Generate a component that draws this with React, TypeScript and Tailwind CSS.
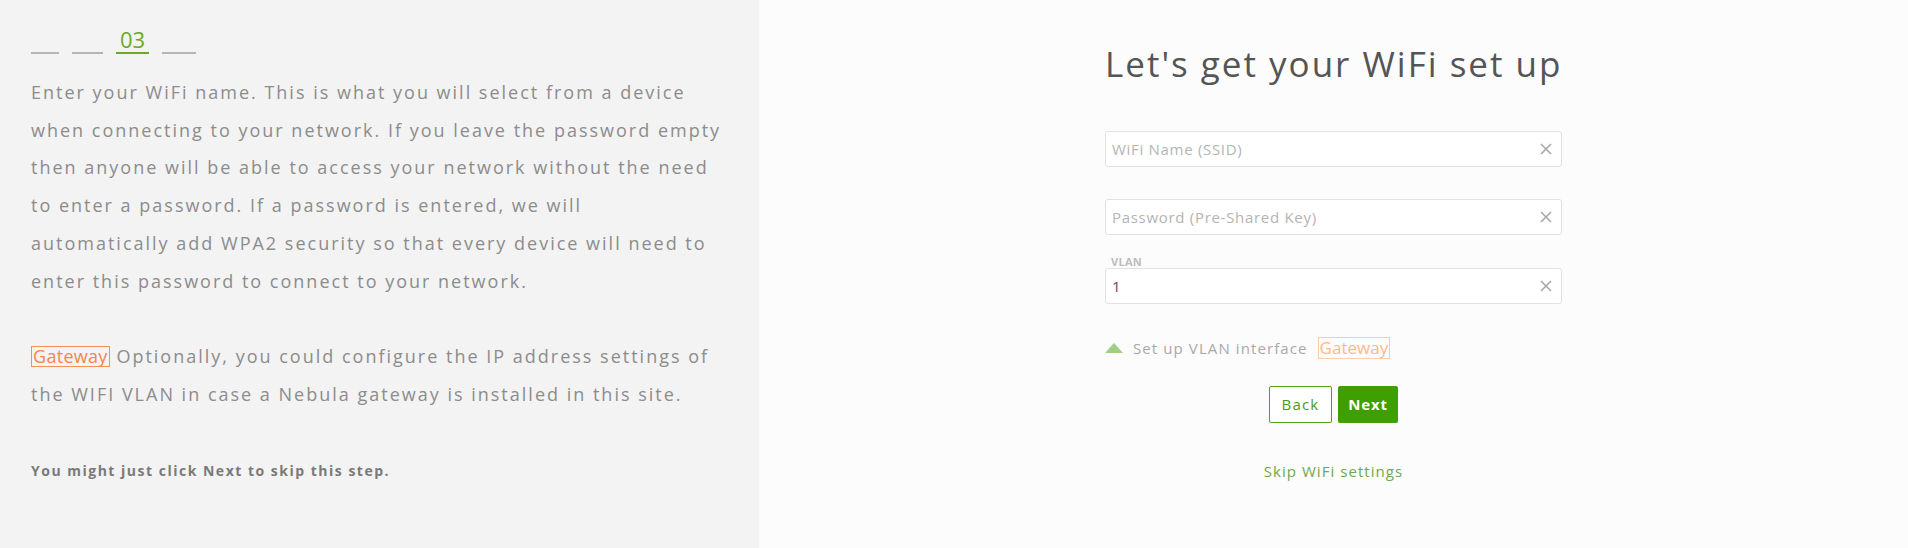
import React from "react";

function XIcon() {
  return (
    <svg width="12" height="12" viewBox="0 0 12 12" className="shrink-0">
      <path d="M1 1 L11 11 M11 1 L1 11" stroke="#a8a8a8" strokeWidth="1.6" fill="none" />
    </svg>
  );
}

function Field({ placeholder, value }: { placeholder?: string; value?: string }) {
  return (
    <div className="flex h-[36px] items-center justify-between rounded-[3px] border border-[#e1e1e1] bg-white pl-[6px] pr-[9px]">
      {value ? (
        <span className="text-[15px] text-[#555555]">{value}</span>
      ) : (
        <span className="text-[15px] tracking-[0.7px] text-[#b4b4b4]">{placeholder}</span>
      )}
      <XIcon />
    </div>
  );
}

const lines = [
  "Enter your WiFi name. This is what you will select from a device",
  "when connecting to your network. If you leave the password empty",
  "then anyone will be able to access your network without the need",
  "to enter a password. If a password is entered, we will",
  "automatically add WPA2 security so that every device will need to",
  "enter this password to connect to your network.",
];

export default function App() {
  return (
    <div
      className="flex h-[548px] w-full"
      style={{ fontFamily: '"Open Sans", "Liberation Sans", sans-serif' }}
    >
      <div className="w-[759px] shrink-0 bg-[#f3f3f3] pl-[31px] pt-[26px]">
        <div className="flex gap-[13px] text-[22px] leading-[26px]">
          <span className="w-[28px] border-b-2 border-[#b5b5b5] text-transparent">01</span>
          <span className="w-[31px] border-b-2 border-[#b5b5b5] text-transparent">02</span>
          <span className="w-[33px] border-b-2 border-[#6aaa1e] text-center text-[#6aaa1e]">03</span>
          <span className="w-[34px] border-b-2 border-[#b5b5b5] text-transparent">04</span>
        </div>
        <div className="mt-[20px] text-[18px] leading-[37.7px] tracking-[2px] text-[#8c8c8c]">
          {lines.map((l) => (
            <div key={l} className="whitespace-nowrap">
              {l}
            </div>
          ))}
          <div className="h-[37.7px]" />
          <div className="whitespace-nowrap">
            <span className="inline-block border border-[#f5924f] px-[1px] leading-[19px] tracking-[0.3px] text-[#f8864a]">
              Gateway
            </span>{" "}
            Optionally, you could configure the IP address settings of
          </div>
          <div className="whitespace-nowrap">
            the WIFI VLAN in case a Nebula gateway is installed in this site.
          </div>
        </div>
        <div className="mt-[48px] text-[14px] font-bold leading-[20px] tracking-[1.5px] text-[#7a7a7a]">
          You might just click Next to skip this step.
        </div>
      </div>
      <div className="flex flex-1 justify-center bg-[#fcfcfc] pt-[40px]">
        <div className="w-[457px]">
          <h1 className="whitespace-nowrap text-[35px] font-normal leading-[48px] tracking-[2px] text-[#555555]">
            Let's get your WiFi set up
          </h1>
          <div className="mt-[43px]">
            <Field placeholder="WiFi Name (SSID)" />
          </div>
          <div className="mt-[32px]">
            <Field placeholder="Password (Pre-Shared Key)" />
          </div>
          <div className="mt-[21px] pl-[6px] text-[11px] font-bold leading-[12px] tracking-[0.3px] text-[#bdbdbd]">
            VLAN
          </div>
          <Field value="1" />
          <div className="mt-[33px] flex h-[22px] items-center">
            <svg width="18" height="10" viewBox="0 0 18 10" className="shrink-0">
              <polygon points="9,0 18,10 0,10" fill="#9ecf84" />
            </svg>
            <span className="ml-[10px] text-[15px] tracking-[1.1px] text-[#a9a9a9]">
              Set up VLAN interface
            </span>
            <span className="ml-[10px] inline-block border border-[#ffcaa8] px-[1px] text-[17px] leading-[20px] text-[#ffb98c]">
              Gateway
            </span>
          </div>
          <div className="mt-[27px] flex justify-center gap-[6px]">
            <button className="h-[37px] w-[63px] rounded-[2px] border border-[#4ea11c] bg-white text-[15px] tracking-[1.2px] text-[#4a9a18]">
              Back
            </button>
            <button className="h-[37px] w-[60px] rounded-[2px] bg-[#3f9e00] text-[15px] font-bold tracking-[0.8px] text-white">
              Next
            </button>
          </div>
          <div className="mt-[38px] text-center text-[15px] leading-[20px] tracking-[1.05px] text-[#6fa84e]">
            Skip WiFi settings
          </div>
        </div>
      </div>
    </div>
  );
}
